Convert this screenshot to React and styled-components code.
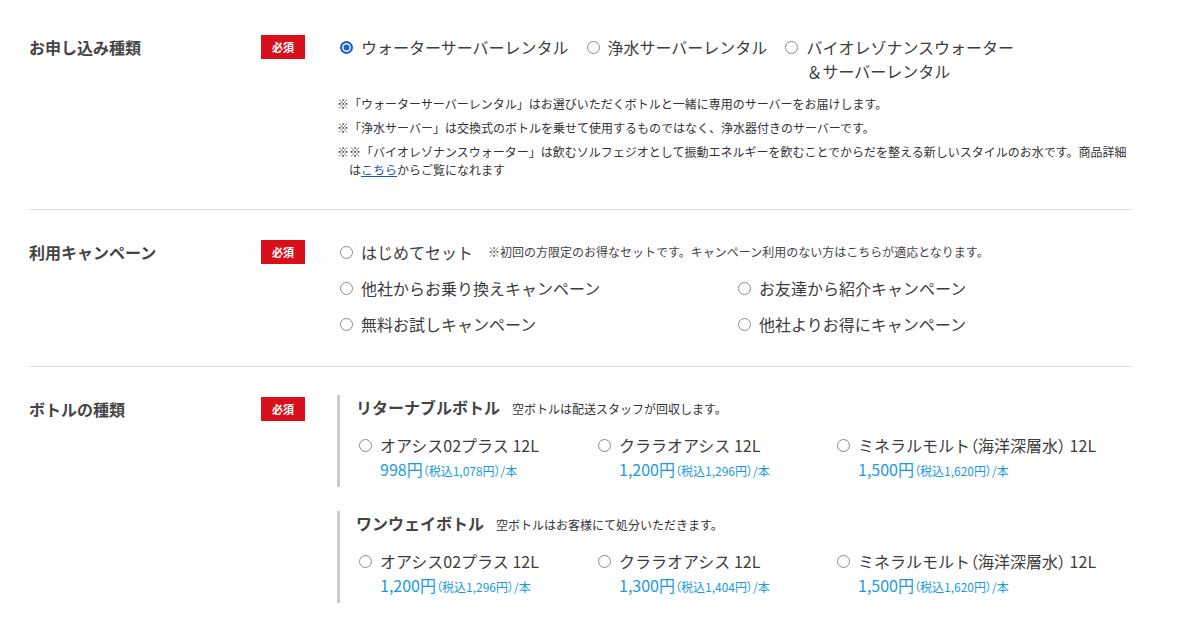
import styled, { createGlobalStyle } from "styled-components";

const GlobalStyle = createGlobalStyle`
  body {
    margin: 0;
    background: #fff;
    font-family: "Noto Sans CJK JP", "Noto Sans", sans-serif;
    color: #3d3d3d;
  }
`

const Page = styled.div`
  padding: 5px 52px 0 29px;
`

const Section = styled.section`
  display: grid;
  grid-template-columns: 232px 78px 1fr;
  padding: 30px 0;
  border-bottom: ${(p) => (p.last ? "none" : "1px solid #e3e3e3")};
`

const Label = styled.div`
  font-size: 16px;
  line-height: 24px;
  font-weight: 700;
  color: #444;
`

const Badge = styled.div`
  width: 44px;
  height: 24px;
  background: #d9101c;
  color: #fff;
  font-size: 11px;
  font-weight: 700;
  display: flex;
  align-items: center;
  justify-content: center;
`

const Content = styled.div`
  min-width: 0;
`

const OptionRow = styled.div`
  display: flex;
  gap: 17px;
`

const Option = styled.label`
  display: flex;
  align-items: flex-start;
  gap: 8px;
  font-size: 16px;
  line-height: 24px;
  color: #3d3d3d;
  padding-left: ${(p) => p.indent || 1}px;
`

const Paren = styled.span`
  font-feature-settings: "palt";
`

const Radio = styled.input.attrs({ type: "radio" })`
  appearance: none;
  flex: none;
  width: 13px;
  height: 13px;
  margin: 6px 0 0;
  border-radius: 50%;
  border: 1px solid #8c8c8c;
  background: #fff;
  &:checked {
    border: 2px solid #1b5fd6;
    background: #1b5fd6;
    box-shadow: inset 0 0 0 1.5px #fff;
  }
`

const Notes = styled.div`
  margin-top: 12px;
  margin-left: -2px;
`

const Note = styled.p`
  margin: 0 0 6px;
  font-size: 12px;
  line-height: 18px;
  color: #333;
  padding-left: 1em;
  text-indent: -1em;
  &:last-child {
    margin-bottom: 0;
  }
  a {
    color: #1356c5;
    text-decoration: underline;
  }
`

const CampaignGrid = styled.div`
  display: grid;
  grid-template-columns: 398px 1fr;
  row-gap: 12px;
`

const Wide = styled.div`
  grid-column: 1 / -1;
  display: flex;
  align-items: flex-start;
  height: 24px;
`

const InlineNote = styled.span`
  font-size: 12px;
  line-height: 24px;
  color: #444;
  margin-left: 15px;
`

const Group = styled.div`
  border-left: 3px solid #cccccc;
  padding: 0 0 6px 16px;
  margin: ${(p) => (p.first ? "-2px 0 0 -2px" : "24px 0 0 -2px")};
`

const GroupTitle = styled.div`
  display: flex;
  align-items: baseline;
  gap: 12px;
  height: 24px;
  line-height: 24px;
  strong {
    font-size: 16px;
    font-weight: 700;
    color: #444;
  }
  span {
    font-size: 12px;
    line-height: 1;
    color: #333;
  }
`

const BottleGrid = styled.div`
  display: grid;
  grid-template-columns: 239px 239px 1fr;
  margin-top: 14px;
`

const Price = styled.div`
  margin-left: 24px;
  height: 24px;
  line-height: 24px;
  color: #1a9be0;
  font-size: 16px;
  small {
    font-size: 12px;
    line-height: 1;
    font-feature-settings: "palt";
  }
`

const returnable = [
  { name: "オアシス02プラス 12L", price: "998円", tax: "（税込1,078円）/本" },
  { name: "クララオアシス 12L", price: "1,200円", tax: "（税込1,296円）/本" },
  { name: "ミネラルモルト", paren: "（海洋深層水）", tail: " 12L", price: "1,500円", tax: "（税込1,620円）/本" },
];

const oneway = [
  { name: "オアシス02プラス 12L", price: "1,200円", tax: "（税込1,296円）/本" },
  { name: "クララオアシス 12L", price: "1,300円", tax: "（税込1,404円）/本" },
  { name: "ミネラルモルト", paren: "（海洋深層水）", tail: " 12L", price: "1,500円", tax: "（税込1,620円）/本" },
];

function BottleGroup({ title, sub, items, name, first }) {
  return (
    <Group first={first}>
      <GroupTitle>
        <strong>{title}</strong>
        <span>{sub}</span>
      </GroupTitle>
      <BottleGrid>
        {items.map((item) => (
          <div key={item.name + item.price}>
            <Option indent={3}>
              <Radio name="bottle" value={name + item.name} />
              <span>
                {item.name}
                {item.paren && <Paren>{item.paren}</Paren>}
                {item.tail}
              </span>
            </Option>
            <Price>
              {item.price}
              <small>{item.tax}</small>
            </Price>
          </div>
        ))}
      </BottleGrid>
    </Group>
  );
}

export default function App() {
  return (
    <Page>
      <GlobalStyle />
      <Section>
        <Label>お申し込み種類</Label>
        <div><Badge>必須</Badge></div>
        <Content>
          <OptionRow>
            <Option>
              <Radio name="type" defaultChecked />
              ウォーターサーバーレンタル
            </Option>
            <Option>
              <Radio name="type" />
              浄水サーバーレンタル
            </Option>
            <Option>
              <Radio name="type" />
              <span>バイオレゾナンスウォーター<br />＆サーバーレンタル</span>
            </Option>
          </OptionRow>
          <Notes>
            <Note>※「ウォーターサーバーレンタル」はお選びいただくボトルと一緒に専用のサーバーをお届けします。</Note>
            <Note>※「浄水サーバー」は交換式のボトルを乗せて使用するものではなく、浄水器付きのサーバーです。</Note>
            <Note>
              ※※「バイオレゾナンスウォーター」は飲むソルフェジオとして振動エネルギーを飲むことでからだを整える新しいスタイルのお水です。商品詳細は<a href="#">こちら</a>からご覧になれます
            </Note>
          </Notes>
        </Content>
      </Section>

      <Section>
        <Label>利用キャンペーン</Label>
        <div><Badge>必須</Badge></div>
        <CampaignGrid>
          <Wide>
            <Option>
              <Radio name="campaign" />
              はじめてセット
            </Option>
            <InlineNote>※初回の方限定のお得なセットです。キャンペーン利用のない方はこちらが適応となります。</InlineNote>
          </Wide>
          <Option>
            <Radio name="campaign" />
            他社からお乗り換えキャンペーン
          </Option>
          <Option>
            <Radio name="campaign" />
            お友達から紹介キャンペーン
          </Option>
          <Option>
            <Radio name="campaign" />
            無料お試しキャンペーン
          </Option>
          <Option>
            <Radio name="campaign" />
            他社よりお得にキャンペーン
          </Option>
        </CampaignGrid>
      </Section>

      <Section last>
        <Label>ボトルの種類</Label>
        <div><Badge>必須</Badge></div>
        <Content>
          <BottleGroup
            first
            title="リターナブルボトル"
            sub="空ボトルは配送スタッフが回収します。"
            items={returnable}
            name="r"
          />
          <BottleGroup
            title="ワンウェイボトル"
            sub="空ボトルはお客様にて処分いただきます。"
            items={oneway}
            name="o"
          />
        </Content>
      </Section>
    </Page>
  );
}
